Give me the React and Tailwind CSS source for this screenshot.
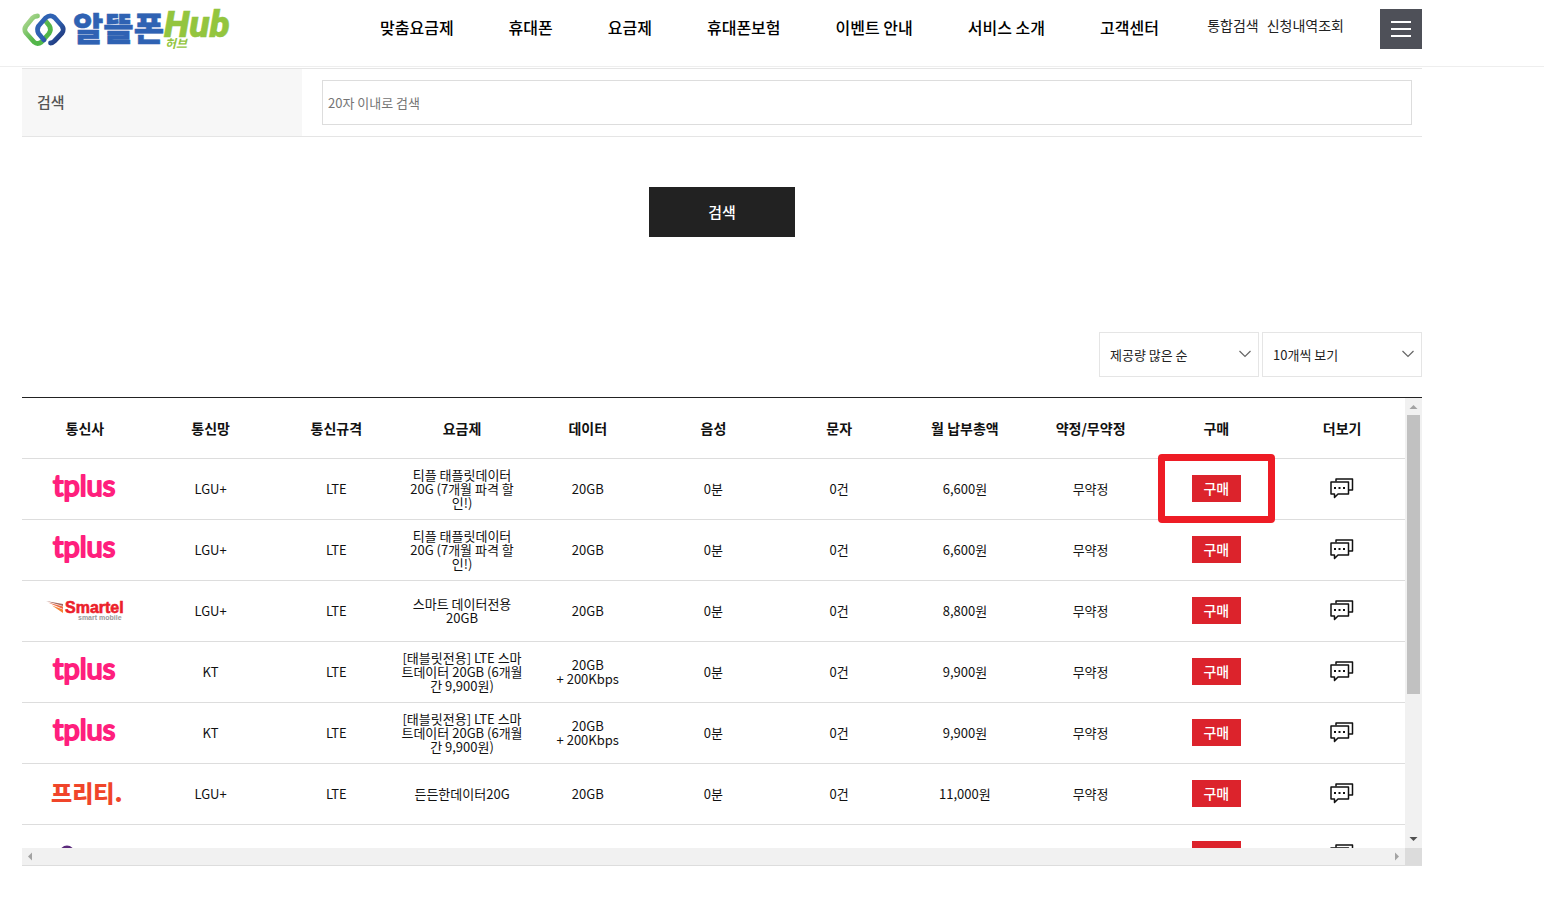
const NAV_ITEMS = ['맞춤요금제', '휴대폰', '요금제', '휴대폰보험', '이벤트 안내', '서비스 소개', '고객센터'];

const COLUMNS = ['통신사', '통신망', '통신규격', '요금제', '데이터', '음성', '문자', '월 납부총액', '약정/무약정', '구매', '더보기'];

const TPLUS_LGU = {
  carrier: 'tplus',
  network: 'LGU+',
  plan: ['티플 태플릿데이터', '20G (7개월 파격 할', '인!)'],
  data: ['20GB'],
  price: '6,600원',
};
const TPLUS_KT = {
  carrier: 'tplus',
  network: 'KT',
  plan: ['[태블릿전용] LTE 스마', '트데이터 20GB (6개월', '간 9,900원)'],
  data: ['20GB', '+ 200Kbps'],
  price: '9,900원',
};

const PLANS = [
  { ...TPLUS_LGU, highlighted: true },
  TPLUS_LGU,
  { carrier: 'smartel', network: 'LGU+', plan: ['스마트 데이터전용', '20GB'], data: ['20GB'], price: '8,800원' },
  TPLUS_KT,
  TPLUS_KT,
  { carrier: 'freet', network: 'LGU+', plan: ['든든한데이터20G'], data: ['20GB'], price: '11,000원' },
];

function SiteLogo() {
  return (
    <svg className="block overflow-visible" width="212" height="48" viewBox="0 0 212 48" role="img" aria-label="알뜰폰 허브">
      <defs>
        <linearGradient id="greenLink" x1="0" y1="0" x2="1" y2="1">
          <stop offset="0" stopColor="#b9dc9a" />
          <stop offset="0.6" stopColor="#55b54a" />
          <stop offset="1" stopColor="#4bb848" />
        </linearGradient>
        <linearGradient id="blueLink" x1="0" y1="0" x2="1" y2="1">
          <stop offset="0" stopColor="#2f62b3" />
          <stop offset="0.5" stopColor="#2f62b3" />
          <stop offset="1" stopColor="#1d2f6f" />
        </linearGradient>
      </defs>
      <g fill="none" strokeWidth="4.8" strokeLinecap="round" strokeLinejoin="round">
        <path d="M15.500 8 Q12.500 8 10.500 10 L4 18 Q1.500 21.500 4 25 L12 34 Q15.500 37 19.500 34 L27 25.500 Q29.500 21.500 27.500 18 L24 13.500" stroke="url(#greenLink)" />
        <path d="M22 32 L16.500 25.500 Q14.500 21.500 16.500 18 L23.500 10 Q28 6 32.500 9.500 L40 18 Q42.500 21.500 40 25 L32.500 33 Q30.500 35 28.500 35" stroke="url(#blueLink)" />
      </g>
      <text x="51" y="33" fontSize="33" fontWeight="900" fill="#2f62b3" stroke="#2f62b3" strokeWidth="0.5" fontFamily="'Noto Sans CJK KR', sans-serif">알뜰폰</text>
      <text x="142" y="29" fontSize="37" fontWeight="900" fontStyle="italic" fill="#93c53e" stroke="#93c53e" strokeWidth="0.5" fontFamily="Roboto, sans-serif">Hub</text>
      <text x="143" y="40" fontSize="12" fontWeight="700" fontStyle="italic" fill="#93c53e" fontFamily="'Noto Sans CJK KR', sans-serif">허브</text>
    </svg>
  );
}

function CarrierLogo({ carrier }) {
  if (carrier === 'tplus') {
    return (
      <svg className="mx-auto block overflow-visible" width="78" height="40" viewBox="0 0 78 40" role="img" aria-label="tplus">
        <text x="7" y="27" fontSize="29" fontWeight="400" fill="#ff1f7d" stroke="#ff1f7d" strokeWidth="2" strokeLinejoin="round" fontFamily="Lato, sans-serif">tplus</text>
      </svg>
    );
  }
  if (carrier === 'smartel') {
    return (
      <svg className="mx-auto block overflow-visible" width="78" height="40" viewBox="0 0 78 40" role="img" aria-label="Smartel smart mobile">
        <path d="M0 10 L17 13 L17 15 Z" fill="#a5675c" />
        <path d="M2 11.500 L17 15.500 L17 18 Z" fill="#ed6b45" />
        <path d="M6 14.500 L17 18.500 L17 22 Z" fill="#f58233" />
        <text x="19" y="22" fontSize="16" fontWeight="700" fill="#ec1f2b" stroke="#ec1f2b" strokeWidth="0.6" fontFamily="'Liberation Sans', sans-serif">Smartel</text>
        <text x="32" y="29" fontSize="7" fontWeight="700" fill="#999" fontFamily="'Liberation Sans', sans-serif">smart mobile</text>
      </svg>
    );
  }
  if (carrier === 'freet') {
    return (
      <svg className="mx-auto block overflow-visible" width="78" height="40" viewBox="0 0 78 40" role="img" aria-label="프리티">
        <text x="5" y="28" fontSize="23" fontWeight="900" fill="#f0452a" fontFamily="'Noto Sans CJK KR', sans-serif">프리티.</text>
      </svg>
    );
  }
  return (
    <svg className="mx-auto block" width="78" height="40" viewBox="0 0 78 40" aria-hidden="true">
      <circle cx="21" cy="18" r="7.500" fill="#5b2a7c" />
    </svg>
  );
}

function ChatIcon() {
  return (
    <svg className="block" width="24" height="21" viewBox="0 0 24 21" fill="none" stroke="#111" strokeWidth="1.5" strokeLinejoin="round" aria-hidden="true">
      <path d="M6 3.500 V1 H22.500 V12 H19" />
      <path d="M1 4 H18.500 V16 H8 L4.500 19.500 V16 H1 Z" />
      <g fill="#111" stroke="none">
        <rect x="4" y="9" width="2" height="2" />
        <rect x="8.500" y="9" width="2" height="2" />
        <rect x="13" y="9" width="2" height="2" />
      </g>
    </svg>
  );
}

function Select({ label, options }) {
  return (
    <div className="relative w-40">
      <select aria-label={label} className="h-[45px] w-full appearance-none border border-[#e5e5e5] bg-white pr-8 pl-2.5 text-[13px] text-[#222]">
        {options.map((option) => (
          <option key={option}>{option}</option>
        ))}
      </select>
      <svg className="pointer-events-none absolute top-[18px] right-2" width="12" height="8" viewBox="0 0 12 8" fill="none" stroke="#666" strokeWidth="1.2" aria-hidden="true">
        <path d="M0.500 1 L6 6.500 L11.500 1" />
      </svg>
    </div>
  );
}

function Lines({ lines }) {
  return lines.map((line) => (
    <span key={line} className="block whitespace-nowrap">
      {line}
    </span>
  ));
}

function BuyButton({ highlighted }) {
  return (
    <div className="relative inline-block align-middle">
      <button type="button" className="block h-[27px] w-[49px] bg-[#dc232c] text-sm leading-[27px] font-medium text-white">
        구매
      </button>
      {highlighted && <span className="pointer-events-none absolute -inset-x-[34px] -inset-y-[21px] z-10 rounded border-[7px] border-[#ee1c25]" />}
    </div>
  );
}

function MoreButton() {
  return (
    <button type="button" aria-label="더보기" className="inline-block align-middle">
      <ChatIcon />
    </button>
  );
}

function PlanRow({ plan }) {
  return (
    <tr className="h-[61px] border-b border-[#ddd]">
      <td><CarrierLogo carrier={plan.carrier} /></td>
      <td>{plan.network}</td>
      <td>LTE</td>
      <td><Lines lines={plan.plan} /></td>
      <td><Lines lines={plan.data} /></td>
      <td>0분</td>
      <td>0건</td>
      <td>{plan.price}</td>
      <td>무약정</td>
      <td><BuyButton highlighted={plan.highlighted} /></td>
      <td><MoreButton /></td>
    </tr>
  );
}

function Arrow({ points, color }) {
  return (
    <svg width="17" height="17" viewBox="0 0 17 17" aria-hidden="true">
      <polygon points={points} fill={color} />
    </svg>
  );
}

function PlanTable() {
  return (
    <div className="mt-5 grid grid-cols-[minmax(0,1fr)_17px] grid-rows-[450px_17px] border-t border-b border-t-[#222] border-b-[#ddd]">
      <div className="overflow-hidden">
        <table className="w-full table-fixed border-collapse text-center text-[13px] leading-[14px] text-[#111]">
          <thead>
            <tr className="h-[60px] border-b border-[#ddd] text-sm">
              {COLUMNS.map((column) => (
                <th key={column} scope="col" className="font-bold">{column}</th>
              ))}
            </tr>
          </thead>
          <tbody>
            {PLANS.map((plan, index) => (
              <PlanRow key={index} plan={plan} />
            ))}
            <tr className="h-[61px]">
              <td><CarrierLogo /></td>
              <td colSpan={8} />
              <td><BuyButton /></td>
              <td><MoreButton /></td>
            </tr>
          </tbody>
        </table>
      </div>
      <div className="flex flex-col bg-[#f1f1f1]" aria-hidden="true">
        <Arrow points="4.500,11 12.500,11 8.500,7" color="#a3a3a3" />
        <div className="mx-0.5 h-[279px] bg-[#c1c1c1]" />
        <div className="mt-auto">
          <Arrow points="4.500,6 12.500,6 8.500,10" color="#505050" />
        </div>
      </div>
      <div className="flex justify-between bg-[#f1f1f1]" aria-hidden="true">
        <Arrow points="10,4.500 10,12.500 6,8.500" color="#a3a3a3" />
        <Arrow points="7,4.500 7,12.500 11,8.500" color="#a3a3a3" />
      </div>
      <div className="bg-[#dcdcdc]" />
    </div>
  );
}

export default function App() {
  return (
    <div className="min-h-screen bg-white font-['Noto_Sans_CJK_KR',sans-serif] text-black">
      <header className="border-b border-[#eee]">
        <div className="flex h-[66px] max-w-[1444px] items-start px-[22px]">
          <a href="#home" className="w-[358px] shrink-0 pt-2">
            <SiteLogo />
          </a>
          <nav className="flex gap-[55px] pt-[15px] text-base leading-6 font-medium whitespace-nowrap">
            {NAV_ITEMS.map((item) => (
              <a key={item} href="#menu">{item}</a>
            ))}
          </nav>
          <div className="mt-[15px] mr-9 ml-auto flex gap-2 text-sm whitespace-nowrap text-[#222]">
            <a href="#search">통합검색</a>
            <a href="#orders">신청내역조회</a>
          </div>
          <button type="button" aria-label="전체 메뉴" className="mt-[9px] flex h-10 w-[42px] shrink-0 flex-col items-center justify-center gap-[5px] bg-[#4e5058]">
            <span className="h-0.5 w-5 bg-white" />
            <span className="h-0.5 w-5 bg-white" />
            <span className="h-0.5 w-5 bg-white" />
          </button>
        </div>
      </header>
      <main className="max-w-[1444px] px-[22px] pt-px">
        <form onSubmit={(event) => event.preventDefault()}>
          <div className="flex border-t border-b border-[#e5e5e5]">
            <label htmlFor="keyword" className="flex w-[280px] shrink-0 items-center bg-[#f7f7f7] pl-[15px] text-[15px] font-medium text-[#555]">
              검색
            </label>
            <div className="flex-1 py-[11px] pr-2.5 pl-5">
              <input id="keyword" type="text" maxLength={20} placeholder="20자 이내로 검색" className="block h-[45px] w-full border border-[#ddd] px-[5px] text-[13px] placeholder:text-[#757575]" />
            </div>
          </div>
          <button type="submit" className="mx-auto mt-[50px] block h-[50px] w-[146px] bg-[#222] text-[15px] font-medium text-white">
            검색
          </button>
        </form>
        <div className="mt-[95px] flex justify-end gap-[3px]">
          <Select label="정렬 기준" options={['제공량 많은 순', '요금 낮은 순']} />
          <Select label="표시 개수" options={['10개씩 보기', '20개씩 보기']} />
        </div>
        <PlanTable />
      </main>
    </div>
  );
}
